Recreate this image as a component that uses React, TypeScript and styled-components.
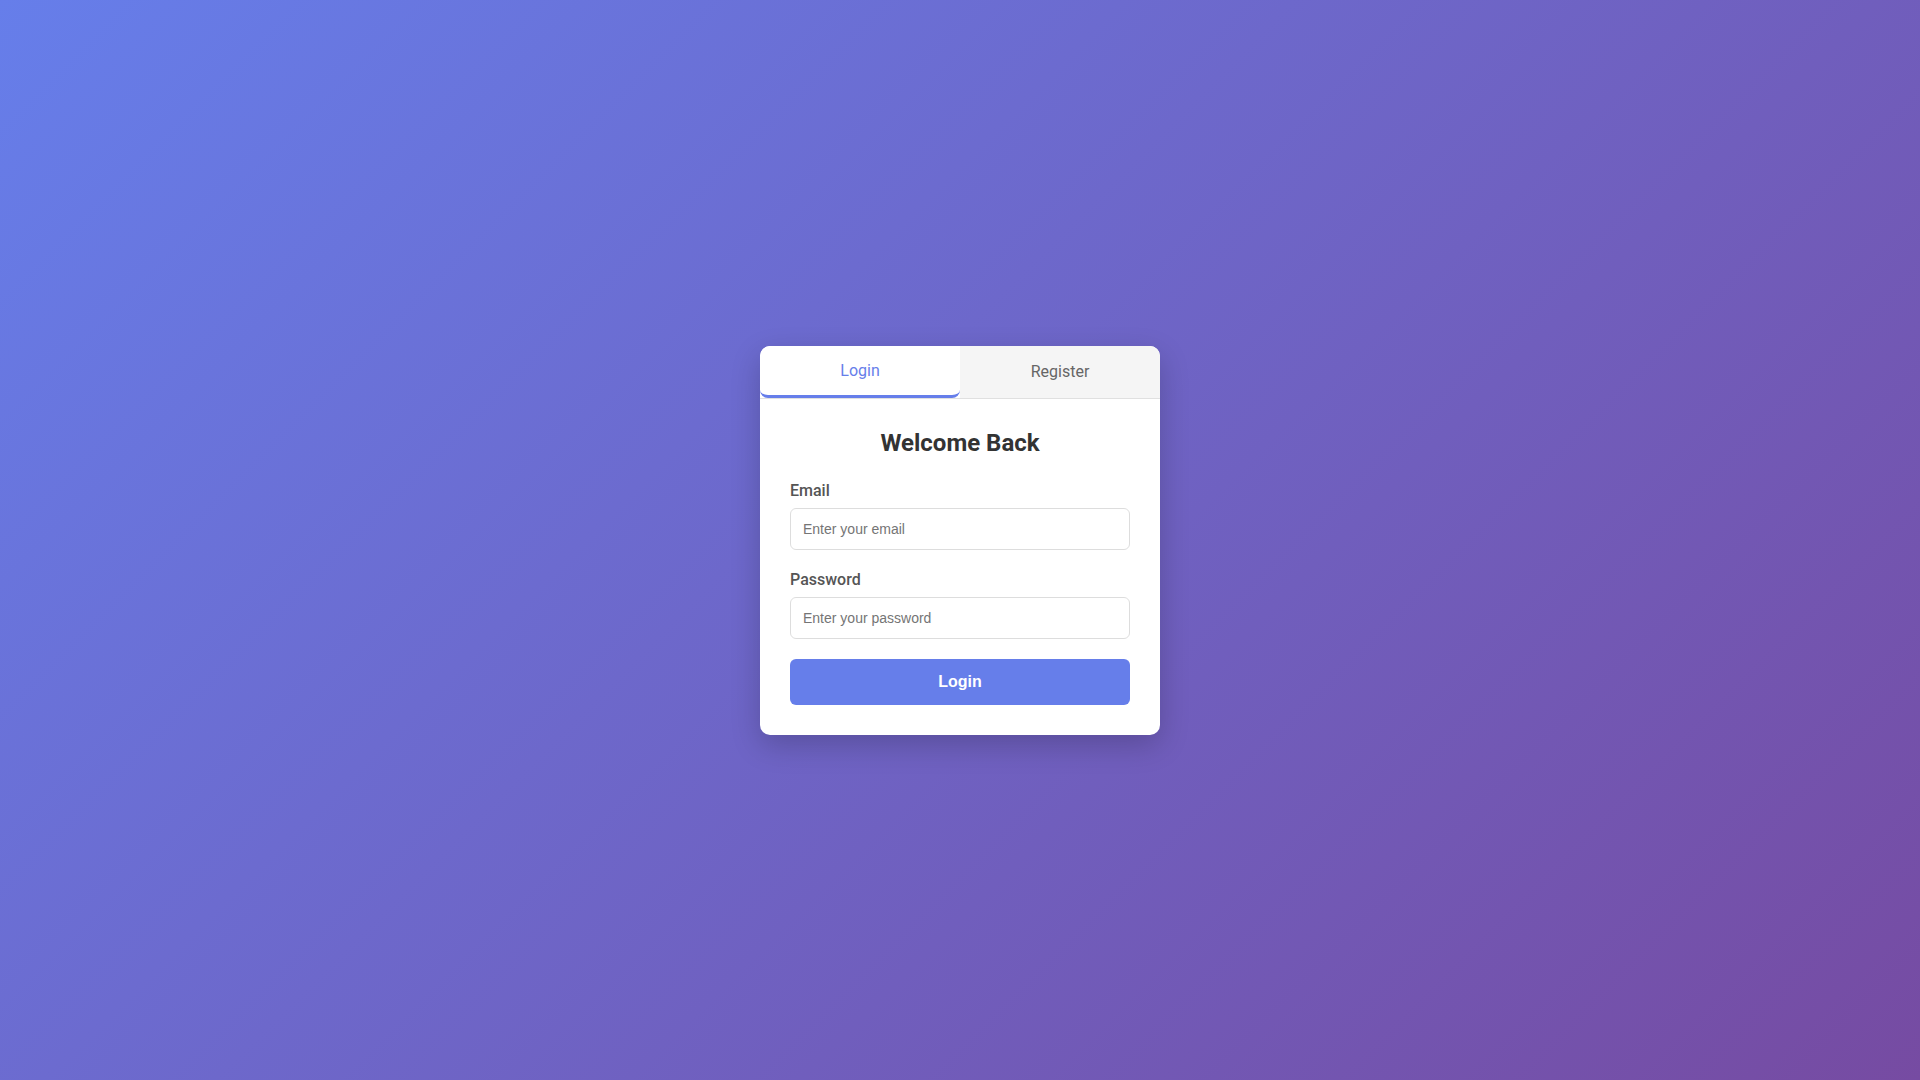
import React, { useState } from 'react';
import styled, { createGlobalStyle } from 'styled-components';

const GlobalStyle = createGlobalStyle`
    * {
        box-sizing: border-box;
    }

    html, body {
        margin: 0;
        padding: 0;
    }

    body {
        font-family: Roboto, "Noto Sans", sans-serif;
        background: linear-gradient(135deg, #667eea 0%, #764ba2 100%);
        min-height: 100vh;
    }
`;

const Page = styled.div`
    min-height: 100vh;
    display: flex;
    align-items: center;
    justify-content: center;
`;

const Card = styled.div`
    width: 400px;
    background: #fff;
    border-radius: 10px;
    box-shadow: 0 10px 30px rgba(0, 0, 0, 0.2);
    overflow: hidden;
`;

const Tabs = styled.div`
    display: flex;
    border-bottom: 1px solid #e0e0e0;
`;

const Tab = styled.div<{ $active?: boolean }>`
    flex: 1;
    display: flex;
    align-items: center;
    justify-content: center;
    padding: 15px;
    font-size: 16px;
    cursor: pointer;
    color: ${p => (p.$active ? '#667eea' : '#666')};
    background: ${p => (p.$active ? '#fff' : '#f5f5f5')};
    border-bottom: ${p => (p.$active ? '3px solid #667eea' : 'none')};
    border-radius: ${p => (p.$active ? '8px' : '0')};
`;

const Form = styled.form`
    padding: 30px;
`;

const Title = styled.h2`
    margin: 0 0 24px;
    text-align: center;
    font-size: 24px;
    font-weight: 700;
    color: #333;
`;

const Group = styled.div`
    margin-bottom: 20px;
`;

const Label = styled.label`
    display: block;
    margin-bottom: 8px;
    font-size: 16px;
    font-weight: 500;
    color: #555;
`;

const Input = styled.input`
    display: block;
    width: 100%;
    padding: 12px;
    border: 1px solid #ddd;
    border-radius: 6px;
    font-family: "Liberation Sans", Arial, sans-serif;
    font-size: 14px;
    color: #333;
    outline: none;

    &::placeholder {
        color: #757575;
    }
`;

const Submit = styled.button`
    display: block;
    width: 100%;
    padding: 14px;
    border: none;
    border-radius: 6px;
    background: #667eea;
    color: #fff;
    font-family: "Liberation Sans", Arial, sans-serif;
    font-size: 16px;
    font-weight: 700;
    cursor: pointer;
`;

const App = () => {
    const [tab, setTab] = useState<'login' | 'register'>('login');

    return (
        <>
            <GlobalStyle />
            <Page>
                <Card>
                    <Tabs>
                        <Tab $active={tab === 'login'} onClick={() => setTab('login')}>Login</Tab>
                        <Tab $active={tab === 'register'} onClick={() => setTab('register')}>Register</Tab>
                    </Tabs>
                    <Form onSubmit={e => e.preventDefault()}>
                        <Title>Welcome Back</Title>
                        <Group>
                            <Label htmlFor="email">Email</Label>
                            <Input id="email" type="email" placeholder="Enter your email" />
                        </Group>
                        <Group>
                            <Label htmlFor="password">Password</Label>
                            <Input id="password" type="password" placeholder="Enter your password" />
                        </Group>
                        <Submit type="submit">Login</Submit>
                    </Form>
                </Card>
            </Page>
        </>
    );
};

export default App;
